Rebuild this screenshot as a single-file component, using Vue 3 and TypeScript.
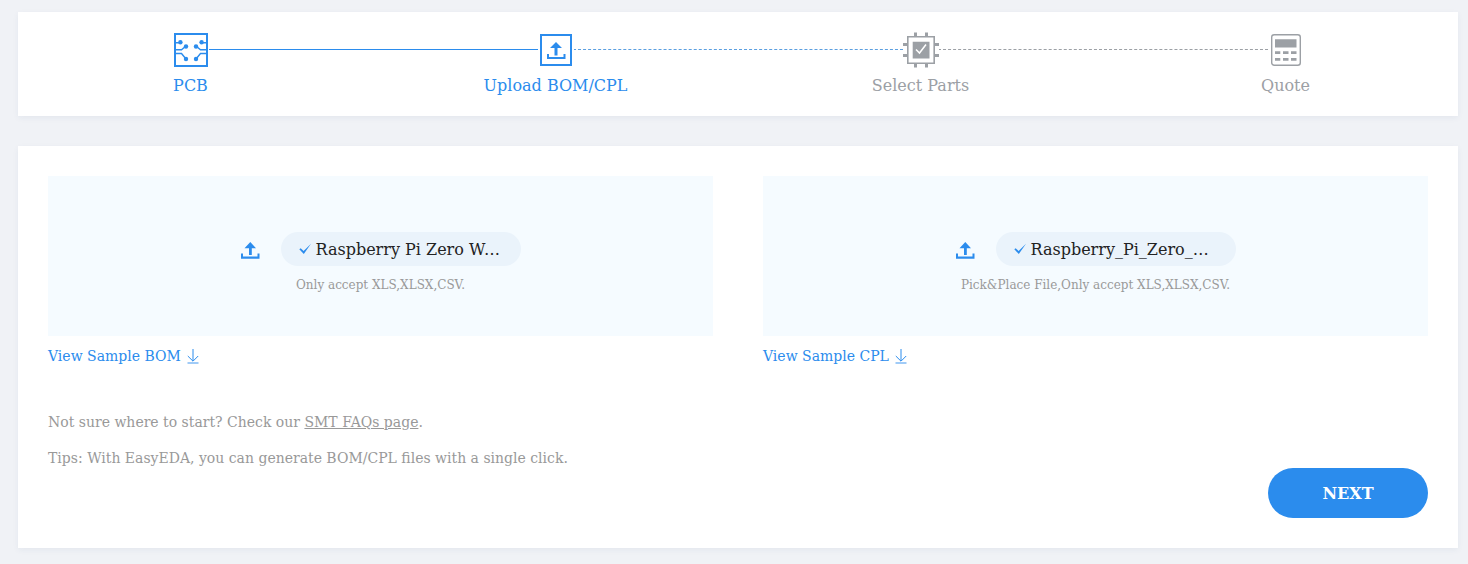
<script setup lang="ts">
interface Step { label: string; icon: string; state: 'done' | 'current' | 'todo' }
interface Upload { file: string; tight: boolean; hint: string; sample: string }

const steps: Step[] = [
  { label: 'PCB', icon: 'pcb', state: 'done' },
  { label: 'Upload BOM/CPL', icon: 'upload', state: 'current' },
  { label: 'Select Parts', icon: 'chip', state: 'todo' },
  { label: 'Quote', icon: 'calc', state: 'todo' },
]

const uploads: Upload[] = [
  { file: 'Raspberry Pi Zero W', tight: true, hint: 'Only accept XLS,XLSX,CSV.', sample: 'View Sample BOM' },
  { file: 'Raspberry_Pi_Zero_', tight: false, hint: 'Pick&Place File,Only accept XLS,XLSX,CSV.', sample: 'View Sample CPL' },
]
</script>

<template>
  <div class="page">
    <section class="card stepper">
      <template v-for="(s, i) in steps" :key="s.label">
        <div v-if="i > 0" class="line" :class="steps[i - 1].state"></div>
        <div class="step" :class="s.state">
          <svg v-if="s.icon === 'pcb'" width="36" height="36" viewBox="0 0 36 36" fill="none" stroke="currentColor">
            <rect x="2" y="2" width="32" height="32" stroke-width="2" />
            <g stroke-width="1.4">
              <path d="M3 10.8H7M3 17.8H8.500L13 14M3 21.500H8.500L13 27M33 10.800H29M33 17.800H27.500L23 14M33 21.500H27.500L23 27" />
            </g>
            <g fill="currentColor" stroke="none">
              <circle cx="7.400" cy="10.200" r="2.200" /><circle cx="13" cy="14.500" r="2.200" /><circle cx="13" cy="27" r="2.200" />
              <circle cx="28.600" cy="10.200" r="2.200" /><circle cx="23" cy="14.500" r="2.200" /><circle cx="23" cy="27" r="2.200" />
            </g>
          </svg>
          <svg v-else-if="s.icon === 'upload'" width="36" height="36" viewBox="0 0 36 36" fill="currentColor">
            <path fill-rule="evenodd" d="M2 2H34V34H2ZM4 4V32H32V4Z" />
            <path d="M18 10L24 16H19.500V23.500H16.500V16H12ZM9 22H11V25H25.500V22H27.500V27H9Z" />
          </svg>
          <svg v-else-if="s.icon === 'chip'" width="36" height="36" viewBox="0 0 36 36" fill="currentColor">
            <path fill-rule="evenodd" d="M4 4H32V32H4ZM5.600 5.600V30.400H30.400V5.600Z" />
            <path d="M11 0.500H14V5H11ZM22 0.500H25V5H22ZM11 31H14V35.500H11ZM22 31H25V35.500H22ZM0 11H5V14H0ZM0 22H5V25H0ZM31 11H36V14H31ZM31 22H36V25H31ZM9.700 9.700H26.500V26.500H9.700Z" />
            <path d="M13 17.500L16.500 21L23 12.500" fill="none" stroke="#fff" stroke-width="1.500" />
          </svg>
          <svg v-else width="36" height="36" viewBox="0 0 36 36" fill="currentColor">
            <rect x="3.700" y="2.700" width="28.600" height="30.600" rx="2.500" fill="none" stroke="currentColor" stroke-width="1.400" />
            <path d="M7 7.300H28.500V15.500H7ZM7 19.300H12.300V22H7ZM15 19.300H20.500V22H15ZM23 19.300H28.500V22H23ZM7 26H12.300V28.800H7ZM15 26H20.500V28.800H15ZM23 26H28.500V28.800H23Z" />
          </svg>
          <span class="label">{{ s.label }}</span>
        </div>
      </template>
    </section>

    <section class="card content">
      <div class="uploads">
        <div v-for="u in uploads" :key="u.sample" class="upload">
          <div class="zone">
            <div class="row">
              <svg class="up" width="20" height="18" viewBox="0 0 20 18" fill="currentColor">
                <path d="M10.300 1L16 7.300H11.800V14H9V7.300H4.500ZM1 12.500H3V15.500H17.500V12.500H19.500V17.800H1Z" />
              </svg>
              <div class="pill">
                <svg width="12" height="12" viewBox="0 0 12 12" fill="currentColor">
                  <path d="M0.300 6.200L1.700 5.300L4.600 8L12 0.700L4.800 11Z" />
                </svg>
                <span>{{ u.file }}<span :class="{ tight: u.tight }">…</span></span>
              </div>
            </div>
            <div class="hint">{{ u.hint }}</div>
          </div>
          <a class="sample">
            <span>{{ u.sample }}</span>
            <svg width="12" height="15" viewBox="0 0 12 15" fill="none" stroke="currentColor">
              <path d="M6 0V12M0.800 7L6 12.200L11.200 7" stroke-width="1" />
              <path d="M0.500 14H11.500" stroke-width="1.200" opacity="0.750" />
            </svg>
          </a>
        </div>
      </div>
      <p class="note first">Not sure where to start? Check our <u>SMT FAQs page</u>.</p>
      <p class="note">Tips: With EasyEDA, you can generate BOM/CPL files with a single click.</p>
      <button class="next">NEXT</button>
    </section>
  </div>
</template>

<style>
body { background: #f0f2f6; }
</style>

<style scoped>
.page {
  box-sizing: border-box;
  height: 564px;
  padding: 12px 10px 16px 18px;
  background: #f0f2f6;
  font-family: "DejaVu Serif", serif;
}
.card { box-sizing: border-box; background: #fff; box-shadow: 0 2px 6px rgba(40, 60, 120, 0.06); }
.stepper { display: flex; height: 104px; padding: 20px 154px 0 155px; }
.step { width: 36px; display: flex; flex-direction: column; align-items: center; flex: none; color: #2b8ced; }
.step svg { display: block; flex: none; }
.step.todo { color: #9ca0a5; }
.label { margin: 8px 1px 0 0; font-size: 16px; line-height: 20px; white-space: nowrap; }
.line { flex: 1; height: 0; margin: 17px 0 0 -1px; border-top: 1px dashed #9ca0a5; clip-path: inset(0 0 0 1px); }
.line.done { border-top: 1px solid #2b8ced; }
.line.current { border-top-color: #5b9fe0; }
.content { height: 402px; margin-top: 30px; padding: 30px 30px 0; }
.uploads { display: grid; grid-template-columns: 665px 665px; justify-content: space-between; }
.zone { box-sizing: border-box; height: 160px; padding-top: 56px; background: #f5fbff; }
.row { display: flex; justify-content: center; align-items: center; }
.up { color: #2b8ced; margin: 2px 21px 0 0; }
.pill { box-sizing: border-box; width: 240px; height: 34px; border-radius: 17px; background: #eaf3fb; padding-left: 18px; display: flex; align-items: center; gap: 4.5px; color: #222; font-size: 16px; white-space: nowrap; }
.pill svg { color: #2b8ced; flex: none; }
.tight { margin-left: -1.3px; }
.hint { margin-top: 9px; text-align: center; font-size: 12px; line-height: 20px; color: #999; }
.sample { display: flex; align-items: center; height: 20px; margin-top: 10px; gap: 6px; color: #2b8ced; font-size: 14px; }
.sample svg { margin-top: 1px; }
.note { margin: 16px 0 0; font-size: 14px; line-height: 20px; color: #999; }
.note.first { margin-top: 46px; }
.next { display: block; width: 160px; height: 50px; margin: 0 0 0 auto; padding: 0; border: 0; border-radius: 25px; background: #2b8ced; color: #fff; font: inherit; font-weight: bold; font-size: 16px; }
</style>
